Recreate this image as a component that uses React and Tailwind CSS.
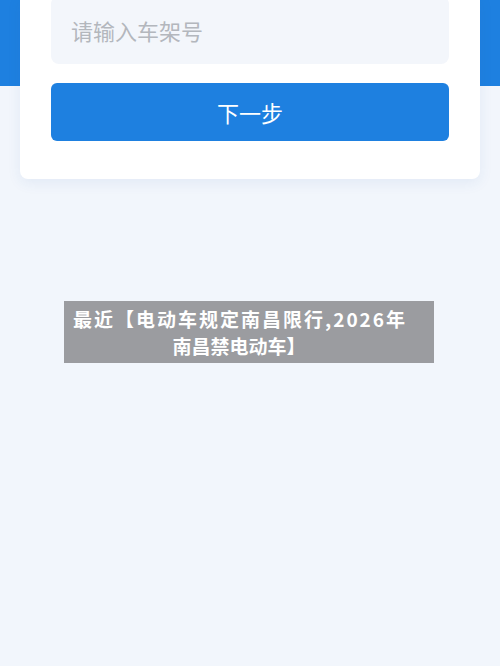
import React from 'react';

const cjk = { fontFamily: '"Noto Sans CJK SC", "Noto Sans", sans-serif' };

export default function App() {
  return (
    <div className="relative min-h-[666px] overflow-hidden bg-[#f2f6fc]" style={cjk}>
      {/* Blue header band */}
      <div className="h-[86px] bg-[#1e80e0]" />

      {/* Form card */}
      <div className="relative mx-5 -mt-[90px] rounded-b-lg bg-white px-[31px] pb-[38px] shadow-[0_4px_14px_rgba(40,90,160,0.08)]">
        <div className="flex h-[68px] items-center rounded-lg bg-[#f3f6fb] px-5 text-[22px] text-[#b3b7bd]">
          请输入车架号
        </div>
        <button className="mt-[19px] flex h-[58px] w-full items-center justify-center rounded-md bg-[#1e80e0] text-[22px] text-white">
          下一步
        </button>
      </div>

      {/* Caption overlay */}
      <div className="absolute left-[64px] top-[301px] w-[370px] bg-[#9b9ca0] py-[4px] pl-[9px] pr-[29px] text-center text-[19px] font-bold leading-[27px] text-white">
        <div className="whitespace-nowrap tracking-[2px]">最近【电动车规定南昌限行,2026年</div>
        <div>南昌禁电动车】</div>
      </div>
    </div>
  );
}
